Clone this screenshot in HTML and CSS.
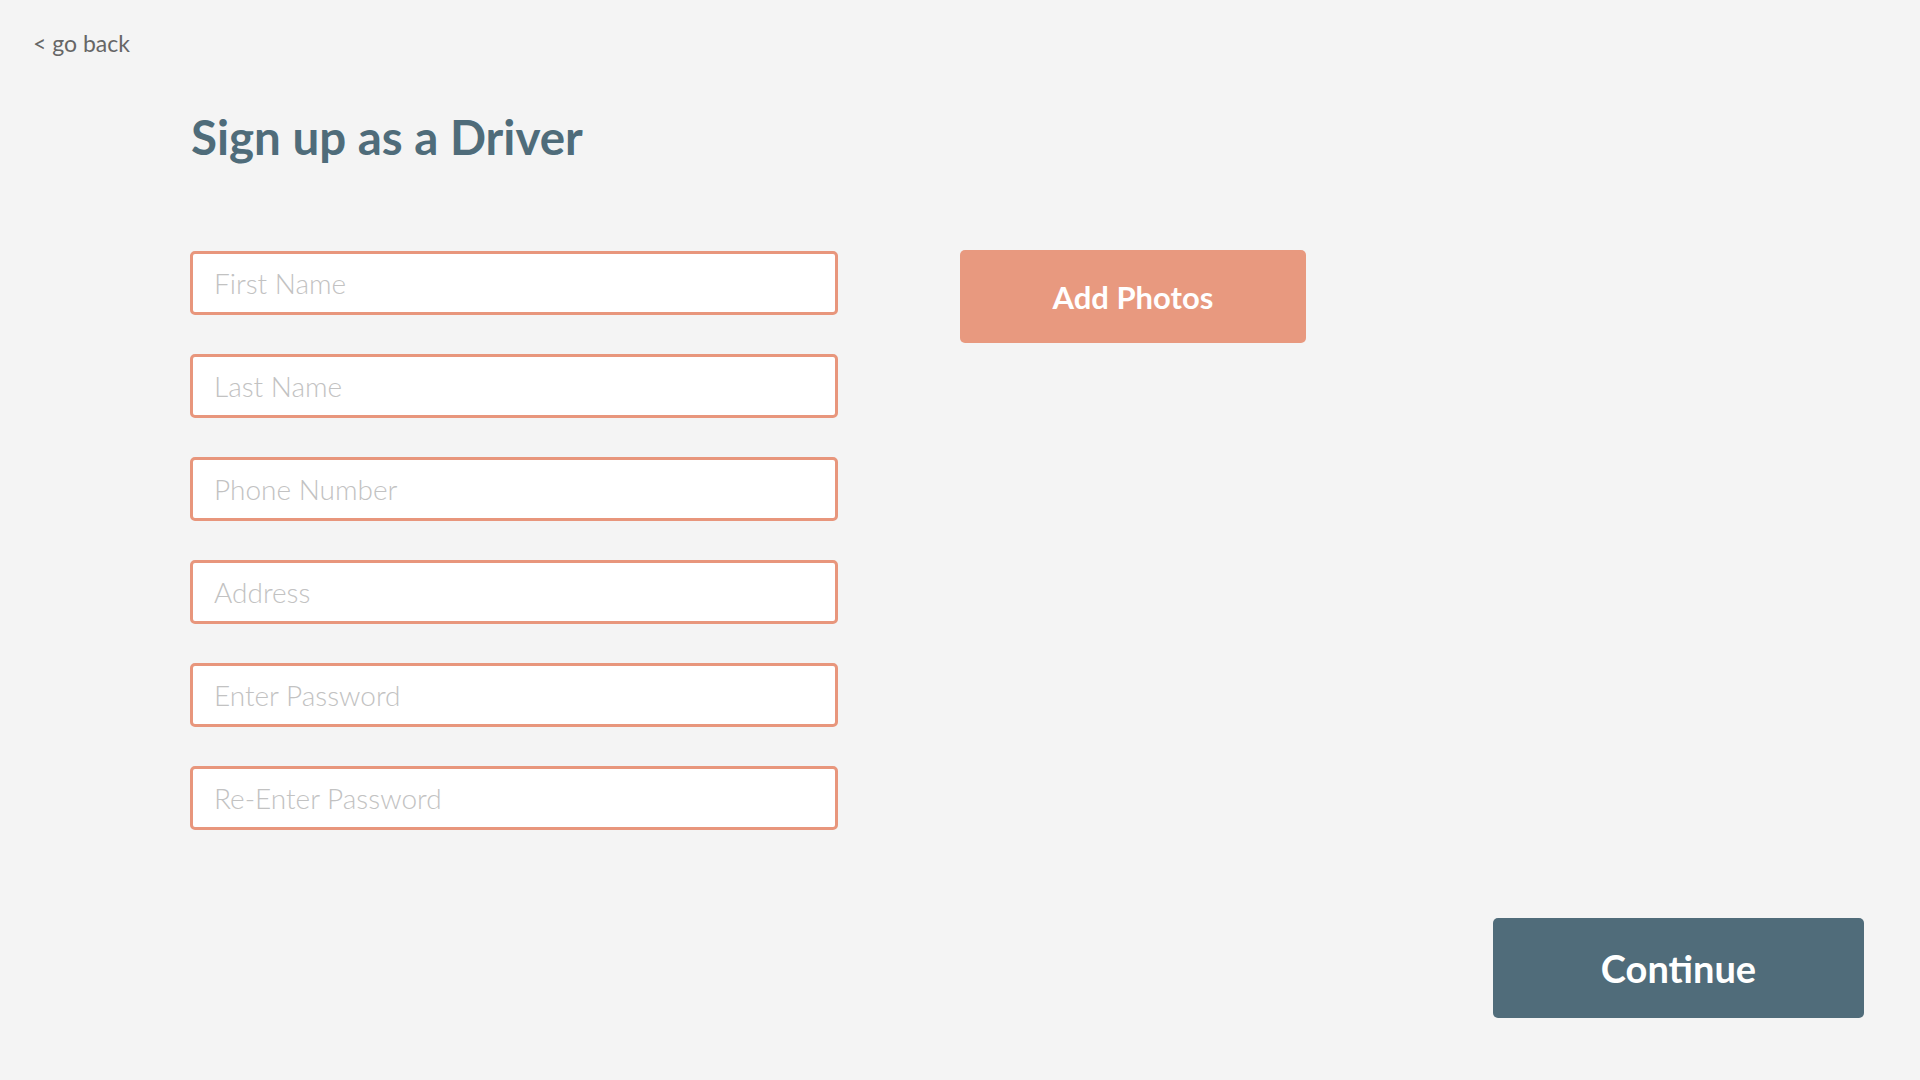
FILE: index.html
```html
<!DOCTYPE html>
<html lang="en">
<head>
<meta charset="utf-8">
<title>Sign up as a Driver</title>
<link rel="stylesheet" href="styles.css">
</head>
<body>
<div class="page">
  <a class="back" href="#">&lt; go back</a>
  <main class="content">
    <h1 class="title">Sign up as a Driver</h1>
    <div class="form-row">
      <form class="fields">
        <input class="field" type="text" placeholder="First Name">
        <input class="field" type="text" placeholder="Last Name">
        <input class="field" type="tel" placeholder="Phone Number">
        <input class="field" type="text" placeholder="Address">
        <input class="field" type="password" placeholder="Enter Password">
        <input class="field" type="password" placeholder="Re-Enter Password">
      </form>
      <button class="btn btn-photos" type="button">Add Photos</button>
    </div>
  </main>
  <div class="footer">
    <button class="btn btn-continue" type="button">Continue</button>
  </div>
</div>
</body>
</html>
```
FILE: styles.css
```css
html, body {
  margin: 0;
  padding: 0;
  background: #f4f4f4;
}
body {
  font-family: Lato, "Open Sans", sans-serif;
}
.page {
  width: 1920px;
  height: 1080px;
  display: flex;
  flex-direction: column;
}
.back {
  display: block;
  align-self: flex-start;
  margin: 29px 0 0 33px;
  font-size: 23px;
  line-height: 28px;
  color: #666666;
  text-decoration: none;
}
.content {
  padding-left: 190px;
}
.title {
  margin: 52px 0 0 1px;
  font-size: 47.5px;
  line-height: 56px;
  font-weight: 700;
  color: #4f6c7a;
}
.form-row {
  display: flex;
  align-items: flex-start;
  gap: 122px;
  margin-top: 86px;
}
.fields {
  display: flex;
  flex-direction: column;
  gap: 39px;
  margin: 0;
}
.field {
  box-sizing: border-box;
  width: 648px;
  height: 64px;
  margin: 0;
  padding: 0 0 0 21px;
  border: 3px solid #e8967c;
  border-radius: 5px;
  background: #ffffff;
  font-family: Lato, "Open Sans", sans-serif;
  font-size: 28px;
  font-weight: 300;
  color: #444;
  outline: none;
}
.field::placeholder {
  color: #c2c2c2;
}
.btn {
  border: none;
  border-radius: 5px;
  font-family: Lato, "Open Sans", sans-serif;
  font-weight: 700;
  color: #ffffff;
  cursor: pointer;
}
.btn-photos {
  width: 346px;
  height: 93px;
  margin-top: -1px;
  background: #e8997f;
  font-size: 31px;
}
.footer {
  display: flex;
  justify-content: flex-end;
  padding-right: 56px;
  margin-top: 88px;
}
.btn-continue {
  width: 371px;
  height: 100px;
  background: #506c7a;
  font-size: 38px;
}
```
